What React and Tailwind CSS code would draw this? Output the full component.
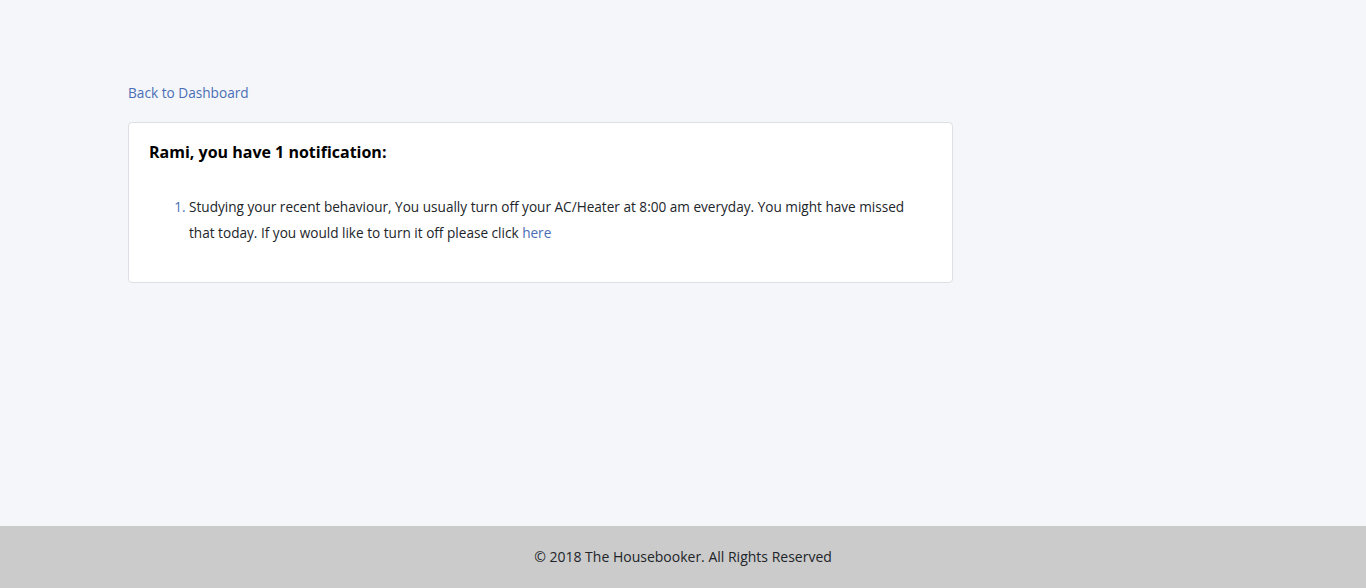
export default function App() {
    return (
        <div className="min-h-screen flex flex-col bg-[#f4f6f9] font-['Open_Sans',sans-serif] text-[#212529]">
            <main className="flex-1 h-[526px] pl-[128px] pt-[83px]">
                <a href="#" className="block text-[13.65px] leading-[20px] text-[#4a6eb6]">Back to Dashboard</a>
                <div className="mt-[19px] w-[825px] h-[161px] bg-white border border-[#dcdfe3] rounded-[4px] px-[20px] pt-[18px]">
                    <h3 className="text-[16px] leading-[22px] font-bold text-black">Rami, you have 1 notification:</h3>
                    <ol className="mt-[31px] list-decimal pl-[40px] pr-[14px] text-[13.6px] leading-[26px] marker:text-[#4a6eb6]">
                        <li>
                            Studying your recent behaviour, You usually turn off your AC/Heater at 8:00 am everyday. You might have missed that today. If you would like to turn it off please click <a href="#" className="text-[#4a6eb6]">here</a>
                        </li>
                    </ol>
                </div>
            </main>
            <footer className="h-[62px] bg-[#cbcbcb] flex items-center justify-center pb-[2px] text-[14px] text-[#212529]">
                © 2018 The Housebooker. All Rights Reserved
            </footer>
        </div>
    )
}
